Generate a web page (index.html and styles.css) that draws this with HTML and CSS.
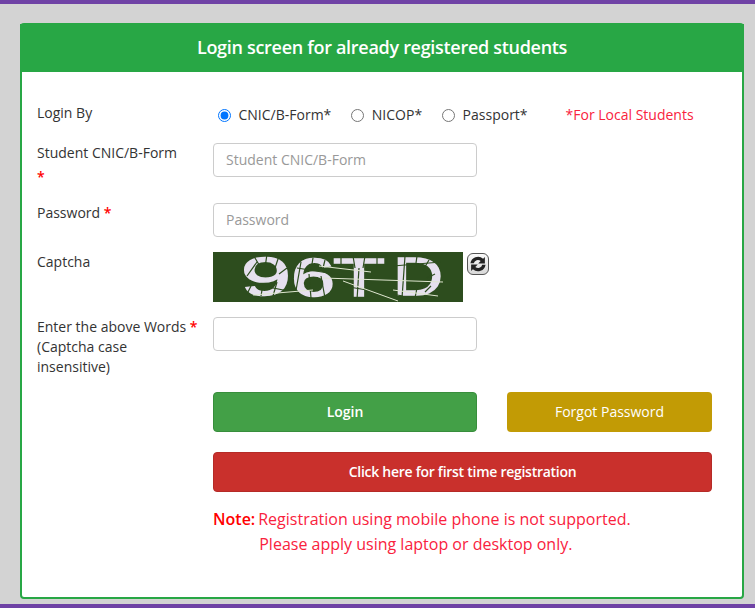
FILE: index.html
```html
<!DOCTYPE html>
<html lang="en">
<head>
    <meta charset="UTF-8">
    <title>Student Login</title>
    <link rel="stylesheet" href="styles.css">
</head>
<body>
    <div class="top-bar"></div>
    <div class="login-card">
        <div class="card-header">Login screen for already registered students</div>
        <form class="card-body">
            <div class="form-row row-login-by">
                <label class="field-label">Login By</label>
                <div class="radio-group">
                    <label class="radio-item"><input type="radio" name="loginby" checked> CNIC/B-Form*</label>
                    <label class="radio-item"><input type="radio" name="loginby"> NICOP*</label>
                    <label class="radio-item"><input type="radio" name="loginby"> Passport*</label>
                    <span class="local-note">*For Local Students</span>
                </div>
            </div>
            <div class="form-row row-cnic">
                <label class="field-label">Student CNIC/B-Form <span class="req req-block">*</span></label>
                <input class="text-input" type="text" placeholder="Student CNIC/B-Form">
            </div>
            <div class="form-row row-password">
                <label class="field-label">Password <span class="req">*</span></label>
                <input class="text-input" type="text" placeholder="Password">
            </div>
            <div class="form-row row-captcha">
                <label class="field-label">Captcha</label>
                <div class="captcha-wrap">
                    <svg class="captcha-img" width="250" height="50" viewBox="0 0 250 50">
                        <rect width="250" height="50" fill="#2d4d1e"/>
                        <g class="captcha-text">
                            <text x="28" y="43" textLength="50" lengthAdjust="spacingAndGlyphs">9</text>
                            <text x="78" y="44" textLength="44" lengthAdjust="spacingAndGlyphs">6</text>
                            <text x="120" y="44" textLength="52" lengthAdjust="spacingAndGlyphs">T</text>
                            <text x="180" y="43" textLength="50" lengthAdjust="spacingAndGlyphs">D</text>
                        </g>
                        <g stroke="#2d4d1e" stroke-width="1.2">
                            <path d="M34 24l10 -14M42 6l6 10M54 2l-2 14M66 4l-4 12M74 16l-8 6M64 30l-4 14M50 32l-2 12M38 34l-4 8"/>
                            <path d="M88 10l-6 34M100 6l-2 12M112 8l-2 8M96 22l2 24M108 24l4 22"/>
                            <path d="M128 4v12M140 4l2 12M152 4l-2 12M164 4v12M146 16l-2 32"/>
                            <path d="M192 4l-3 42M204 4l-2 14M216 8l-6 10M222 22l-8 4M218 34l-6 6M204 36l-2 10"/>
                            <path d="M30 30l50 10M84 16l50 8M130 34l60 10M180 14l48 -4"/>
                        </g>
                        <g stroke="#dfe6d0" stroke-width="1" fill="none">
                            <path d="M40 43l60 -5M106 14l52 6M110 26l120 4M130 29l55 20M180 38l45 6"/>
                        </g>
                    </svg>
                    <button class="refresh-btn" type="button" aria-label="Refresh captcha">
                        <svg width="20" height="20" viewBox="0 0 18 18">
                            <path d="M2.2 8.4a6.9 6.9 0 0 1 11.4 -4.2l1.6 -1.6v6h-6l2.2 -2.2a3.8 3.8 0 0 0 -6.2 2z" fill="#222"/>
                            <path d="M15.8 9.6a6.9 6.9 0 0 1 -11.4 4.2l-1.6 1.6v-6h6l-2.2 2.2a3.8 3.8 0 0 0 6.2 -2z" fill="#222"/>
                        </svg>
                    </button>
                </div>
            </div>
            <div class="form-row row-words">
                <label class="field-label">Enter the above Words <span class="req">*</span><span class="hint">(Captcha case insensitive)</span></label>
                <input class="text-input" type="text">
            </div>
            <div class="form-row row-actions">
                <span></span>
                <div class="actions">
                    <div class="action-line">
                        <button class="btn btn-login" type="button">Login</button>
                        <button class="btn btn-forgot" type="button">Forgot Password</button>
                    </div>
                    <button class="btn btn-register" type="button">Click here for first time registration</button>
                    <div class="note">
                        <span class="note-title">Note:</span>
                        <div>Registration using mobile phone is not supported.<br><span class="note-second">Please apply using laptop or desktop only.</span></div>
                    </div>
                </div>
            </div>
        </form>
    </div>
    <div class="bottom-bar"></div>
</body>
</html>
```

FILE: styles.css
```css
html, body {
    height: 100%;
}

body {
    margin: 0;
    background: #d3d3d3;
    font-family: "Open Sans", "Noto Sans", sans-serif;
    font-size: 14px;
    line-height: 24px;
    color: #333;
    overflow: hidden;
}

.top-bar {
    height: 4px;
    background: #6f42a5;
}

.bottom-bar {
    height: 4px;
    margin-top: 5px;
    background: #6f42a5;
}

.login-card {
    box-sizing: border-box;
    width: 724px;
    height: 576px;
    margin: 19px 0 0 20px;
    border: 2px solid #28a745;
    border-radius: 4px;
    background: #fff;
}

.card-header {
    height: 48px;
    margin: -1px -2px 0;
    background: #28a745;
    color: #fff;
    font-size: 18px;
    font-weight: 600;
    line-height: 47px;
    text-align: center;
    letter-spacing: -0.3px;
}

.card-body {
    padding: 29px 30px 0 15px;
}

.form-row {
    display: grid;
    grid-template-columns: 176px 1fr;
}

.field-label {
    font-weight: 500;
    color: #333;
}

.req {
    color: #f00;
    font-weight: 600;
}

.req-block {
    display: block;
}

.hint {
    display: block;
    font-weight: 400;
    line-height: 20px;
    width: 150px;
}

.row-login-by {
    height: 40px;
}

.radio-group {
    display: flex;
    align-items: flex-start;
    padding: 2px 0 0 5px;
}

.radio-item {
    display: flex;
    align-items: center;
    gap: 7.5px;
    margin-right: 20px;
}

.radio-item input {
    width: 13px;
    height: 13px;
    margin: 0;
    accent-color: #0075ff;
}

.local-note {
    margin-left: 18px;
    color: #f9223d;
}

.row-cnic {
    height: 60px;
}

.row-password {
    height: 49px;
}

.row-cnic .text-input,
.row-password .text-input {
    margin-top: 2px;
}

.text-input {
    box-sizing: border-box;
    width: 264px;
    height: 34px;
    padding: 0 12px 2px;
    border: 1px solid #ccc;
    border-radius: 4px;
    font-family: inherit;
    font-size: 14px;
    color: #555;
}

.text-input::placeholder {
    color: #999;
}

.row-captcha {
    height: 67px;
}

.captcha-wrap {
    display: flex;
    align-items: flex-start;
    margin-top: 2px;
}

.captcha-img {
    display: block;
    overflow: visible;
}

.captcha-text {
    font-family: "Liberation Sans", sans-serif;
    font-size: 54px;
    fill: #e6e0ee;
    stroke: #e6e0ee;
    stroke-width: 1.5px;
}

.refresh-btn {
    display: flex;
    align-items: center;
    justify-content: center;
    width: 22px;
    height: 22px;
    margin: 1px 0 0 4px;
    padding: 0;
    border: 1px solid #555;
    border-radius: 6px;
    background: linear-gradient(#fafafa, #d8d8d8);
}

.row-words {
    height: 75px;
}

.row-words .field-label {
    line-height: 20px;
}

.actions {
    display: flex;
    flex-direction: column;
}

.action-line {
    display: flex;
    justify-content: space-between;
    margin-bottom: 20px;
}

.btn {
    box-sizing: border-box;
    height: 40px;
    padding: 0 0 2px;
    border: 1px solid transparent;
    border-radius: 4px;
    color: #fff;
    font-family: inherit;
    font-size: 14px;
}

.btn-login {
    width: 264px;
    background: #43a047;
    border-color: #388e3c;
    font-weight: 600;
}

.btn-forgot {
    width: 205px;
    background: #c29b05;
}

.btn-register {
    background: #c9302c;
    border-color: #b52b27;
    font-weight: 600;
    letter-spacing: -0.27px;
}

.note {
    display: flex;
    gap: 3px;
    margin-top: 15px;
    font-size: 16px;
    line-height: 25px;
    color: #f9223d;
}

.note-title {
    color: #f00;
    font-weight: 600;
}

.note-second {
    margin-left: 1px;
}
```
